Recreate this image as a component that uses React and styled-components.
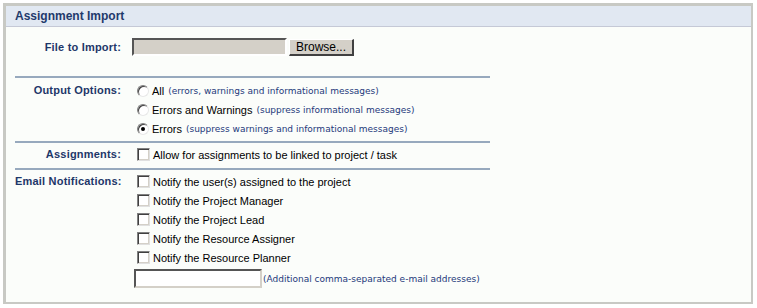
import React from "react";
import styled, { createGlobalStyle } from "styled-components";

const GlobalStyle = createGlobalStyle`
  body {
    margin: 0;
    background: #ffffff;
    font-family: "Liberation Sans", Arial, sans-serif;
  }
`;

const Panel = styled.div`
  margin: 3px 0 0 3px;
  width: 745px;
  border-style: solid;
  border-color: #c8c9c4;
  border-width: 3px 2px 2px 3px;
  background: #fbfdfa;
`;

const Header = styled.div`
  height: 20px;
  background: #e1e8f2;
  border-bottom: 1px solid #c5c9d6;
  display: flex;
  align-items: center;
  padding-left: 9px;
  font-size: 12px;
  font-weight: 700;
  color: #1f3a6c;
`;

const Body = styled.div`
  width: 475px;
  margin-left: 9px;
  padding-bottom: 14px;
`;

const Section = styled.div`
  display: grid;
  grid-template-columns: 106px 1fr;
  column-gap: 11px;
  padding: ${(p) => p.$pad || "3px 0"};
  border-bottom: ${(p) => (p.$last ? "none" : "2px solid #97a9bd")};
`;

const Label = styled.div`
  text-align: right;
  font-size: 11px;
  font-weight: 700;
  letter-spacing: 0.2px;
  color: #1e3769;
  line-height: 19px;
  white-space: nowrap;
`;

const Options = styled.div`
  display: flex;
  flex-direction: column;
`;

const Row = styled.div`
  display: flex;
  align-items: center;
  height: ${(p) => p.$h || 19}px;
  margin-top: ${(p) => p.$top || 0}px;
  font-size: 11px;
  color: #000;
  white-space: nowrap;
`;

const Hint = styled.span`
  font-family: "DejaVu Sans", Verdana, sans-serif;
  font-size: 9px;
  color: #24397a;
  margin-left: ${(p) => p.$gap ?? 4}px;
`;

const FileBox = styled.div`
  width: 151px;
  height: 14px;
  background: #d4d0c8;
  border-style: solid;
  border-width: 2px;
  border-color: #555 #fff #fff #555;
`;

const Button = styled.div`
  width: 62px;
  height: 14px;
  margin-left: 2px;
  background: #d4d0c8;
  border-style: solid;
  border-width: 1px 2px 2px 1px;
  border-color: #fff #404040 #404040 #fff;
  font-size: 12px;
  line-height: 15px;
  text-align: center;
  color: #000;
`;

const Radio = styled.span`
  position: relative;
  width: 10px;
  height: 10px;
  margin: 0 3px 0 5px;
  border-radius: 50%;
  border: 1px solid;
  border-color: #808080 #e8e8e8 #e8e8e8 #808080;
  box-shadow: inset 1px 1px 0 #404040;
  background: #fff;
  flex: none;

  &::after {
    content: "";
    display: ${(p) => (p.$checked ? "block" : "none")};
    position: absolute;
    left: 3px;
    top: 3px;
    width: 4px;
    height: 4px;
    border-radius: 50%;
    background: #000;
  }
`;

const Check = styled.span`
  width: 11px;
  height: 11px;
  margin: 0 3px 0 5px;
  border: 1px solid;
  border-color: #808080 #e0e0e0 #e0e0e0 #808080;
  box-shadow: inset 1px 1px 0 #404040, inset -1px -1px 0 #d4d0c8;
  background: #fff;
  flex: none;
`;

const TextBox = styled.div`
  width: 124px;
  height: 15px;
  margin-left: 2px;
  background: #fff;
  border-style: solid;
  border-width: 2px;
  border-color: #555 #d4d0c8 #d4d0c8 #555;
`;

const outputs = [
  { text: "All", hint: "(errors, warnings and informational messages)" },
  { text: "Errors and Warnings", hint: "(suppress informational messages)" },
  { text: "Errors", hint: "(suppress warnings and informational messages)", checked: true },
];

const notices = [
  "Notify the user(s) assigned to the project",
  "Notify the Project Manager",
  "Notify the Project Lead",
  "Notify the Resource Assigner",
  "Notify the Resource Planner",
];

export default function App() {
  return (
    <>
      <GlobalStyle />
      <Panel>
        <Header>Assignment Import</Header>
        <Body>
          <Section $pad="11px 0 19px">
            <Label>File to Import:</Label>
            <Row $h={18}>
              <FileBox />
              <Button>Browse...</Button>
            </Row>
          </Section>
          <Section>
            <Label>Output Options:</Label>
            <Options>
              {outputs.map((o) => (
                <Row key={o.text}>
                  <Radio $checked={o.checked} />
                  {o.text}
                  <Hint>{o.hint}</Hint>
                </Row>
              ))}
            </Options>
          </Section>
          <Section $pad="2px 0 4px">
            <Label>Assignments:</Label>
            <Row>
              <Check />
              Allow for assignments to be linked to project / task
            </Row>
          </Section>
          <Section $pad="2px 0 0" $last>
            <Label>Email Notifications:</Label>
            <Options>
              {notices.map((n) => (
                <Row key={n}>
                  <Check />
                  {n}
                </Row>
              ))}
              <Row $top={2}>
                <TextBox />
                <Hint $gap={1}>(Additional comma-separated e-mail addresses)</Hint>
              </Row>
            </Options>
          </Section>
        </Body>
      </Panel>
    </>
  );
}
